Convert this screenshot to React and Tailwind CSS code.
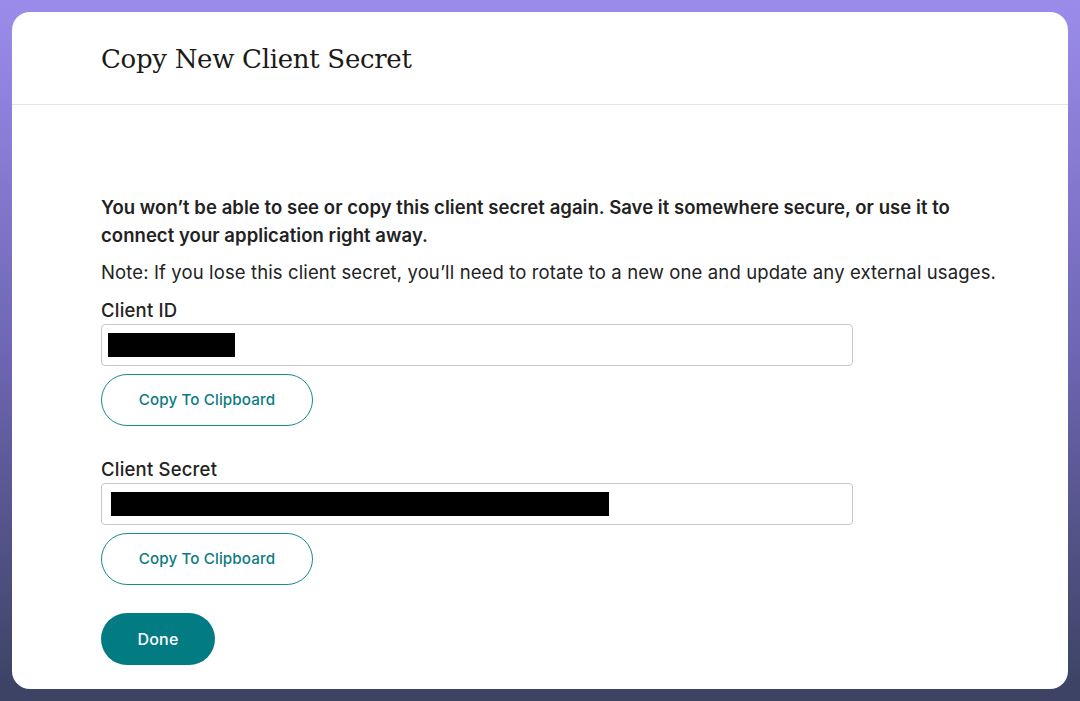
import React from "react";

const sans = { fontFamily: "Inter, 'Liberation Sans', sans-serif" };

function Field({ label, redactWidth, redactLeft }) {
    return (
        <div className="flex flex-col">
            <label className="text-[18.5px] leading-[26px] font-medium text-[#222] tracking-[0.2px]">{label}</label>
            <div className="mt-[1px] h-[42px] w-[752px] rounded-[4px] border border-[#c8c8c8] bg-white flex items-center">
                <div className={`h-[24px] bg-black ${redactLeft}`} style={{ width: redactWidth }} />
            </div>
            <button className="mt-[8px] h-[52px] w-[212px] rounded-full border border-[#1a8a90] text-[#0b7b82] text-[15.2px] font-medium tracking-[0.1px]">
                Copy To Clipboard
            </button>
        </div>
    );
}

export default function App() {
    return (
        <div className="w-[1080px] h-[701px] p-[12px] bg-gradient-to-b from-[#9b8ceb] via-[#6f66b4] to-[#3b4262]" style={sans}>
            <div className="h-full w-full bg-white rounded-[18px] flex flex-col overflow-hidden">
                {/* Header */}
                <div className="h-[93px] border-b border-[#e3e3e3] pl-[89px] flex items-center">
                    <h1
                        className="text-[26px] text-[#1c1a17] tracking-[-0.3px] pt-[2px]"
                        style={{ fontFamily: "'DejaVu Serif', 'Liberation Serif', serif" }}
                    >
                        Copy New Client Secret
                    </h1>
                </div>

                {/* Body */}
                <div className="pl-[89px] pt-[88px] flex flex-col">
                    <p className="text-[18.5px] leading-[28px] font-semibold text-[#222] w-[870px] tracking-[0.05px]">
                        You won’t be able to see or copy this client secret again. Save it somewhere secure, or use it to connect your application right away.
                    </p>
                    <p className="mt-[9px] text-[18.5px] leading-[28px] text-[#222] tracking-[0.12px]">
                        Note: If you lose this client secret, you’ll need to rotate to a new one and update any external usages.
                    </p>
                    <div className="mt-[11px]">
                        <Field label="Client ID" redactWidth={127} redactLeft="ml-[6px]" />
                    </div>
                    <div className="mt-[30px]">
                        <Field label="Client Secret" redactWidth={498} redactLeft="ml-[9px]" />
                    </div>
                    <button className="mt-[28px] h-[52px] w-[114px] rounded-full bg-[#027b83] text-white text-[16px] font-medium tracking-[0.2px]">
                        Done
                    </button>
                </div>
            </div>
        </div>
    );
}
